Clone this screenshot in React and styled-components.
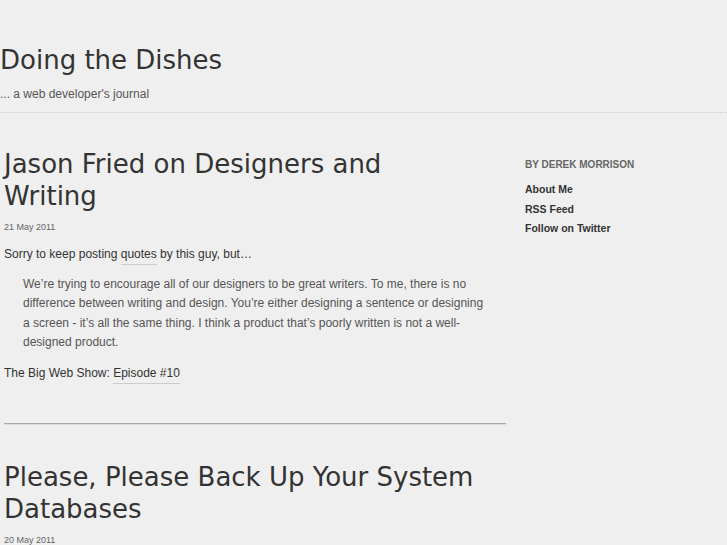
import React from 'react';
import styled, { createGlobalStyle } from 'styled-components';

// page reset

const GlobalStyle = createGlobalStyle`
  html, body {
    margin: 0;
    padding: 0;
    background: #efefef;
  }
  body {
    font-family: "Liberation Sans", Arial, sans-serif;
    color: #333;
  }
`;

const Header = styled.header`
  padding: 44px 0 9px;
  border-bottom: 1px dotted #d0d0d0;
`;

const SiteTitle = styled.h1`
  margin: 0;
  font-family: "DejaVu Sans", sans-serif;
  font-weight: normal;
  font-size: 26px;
  line-height: 32px;
  color: #333;
`;

const Tagline = styled.p`
  margin: 9px 0 0;
  font-size: 12px;
  line-height: 18px;
  color: #555;
`;

const Layout = styled.div`
  display: grid;
  grid-template-columns: 502px 1fr;
  column-gap: 19px;
  padding: 35px 0 0 4px;
`;

const Main = styled.main``;

const Post = styled.article`
  & + & {
    margin-top: 40px;
    padding-top: 37px;
    border-top: 1px solid #aaa;
    box-shadow: inset 0 1px 0 #dcdcdc;
  }
`;

const PostTitle = styled.h2`
  margin: 0;
  padding-right: 26px;
  font-family: "DejaVu Sans", sans-serif;
  font-weight: normal;
  font-size: 26px;
  line-height: 32px;
  color: #333;
`;

const PostDate = styled.div`
  margin-top: 8px;
  font-size: 9px;
  line-height: 14px;
  color: #666;
`;

const Body = styled.div`
  margin-top: 11px;
  font-size: 12px;
  line-height: 19.5px;
`;

const Para = styled.p`
  margin: 0 0 10px;
`;

const Quote = styled.blockquote`
  margin: 0 19px 11px;
  color: #555;
`;

const TextLink = styled.a`
  color: #333;
  text-decoration: none;
  border-bottom: 1px solid #ccc;
  padding-bottom: 3px;
`;

const Sidebar = styled.aside`
  padding-top: 10px;
`;

const SideHeading = styled.h3`
  margin: 0 0 8px;
  font-size: 10px;
  line-height: 14px;
  font-weight: bold;
  text-transform: uppercase;
  color: #666;
`;

const SideList = styled.ul`
  list-style: none;
  margin: 0;
  padding: 0;
`;

const SideLink = styled.a`
  display: block;
  font-size: 10.5px;
  line-height: 19.5px;
  font-weight: bold;
  color: #333;
  text-decoration: none;
`;

const links = ['About Me', 'RSS Feed', 'Follow on Twitter'];

export default function App() {
  return (
    <>
      <GlobalStyle />
      <Header>
        <SiteTitle>Doing the Dishes</SiteTitle>
        <Tagline>... a web developer's journal</Tagline>
      </Header>
      <Layout>
        <Main>
          <Post>
            <PostTitle>Jason Fried on Designers and Writing</PostTitle>
            <PostDate>21 May 2011</PostDate>
            <Body>
              <Para>
                Sorry to keep posting <TextLink href="#">quotes</TextLink> by this guy, but…
              </Para>
              <Quote>
                We’re trying to encourage all of our designers to be great writers. To me, there is no
                difference between writing and design. You’re either designing a sentence or designing
                a screen - it’s all the same thing. I think a product that’s poorly written is not a
                well-designed product.
              </Quote>
              <Para>
                The Big Web Show: <TextLink href="#">Episode #10</TextLink>
              </Para>
            </Body>
          </Post>
          <Post>
            <PostTitle>Please, Please Back Up Your System Databases</PostTitle>
            <PostDate>20 May 2011</PostDate>
          </Post>
        </Main>
        <Sidebar>
          <SideHeading>By Derek Morrison</SideHeading>
          <SideList>
            {links.map((l) => (
              <li key={l}>
                <SideLink href="#">{l}</SideLink>
              </li>
            ))}
          </SideList>
        </Sidebar>
      </Layout>
    </>
  );
}
